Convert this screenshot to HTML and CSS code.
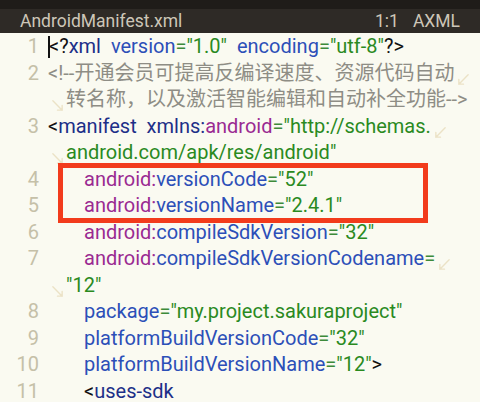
FILE: index.html
```html
<!DOCTYPE html>
<html lang="zh-CN">
<head>
    <meta charset="UTF-8">
    <title>AndroidManifest.xml</title>
    <link rel="stylesheet" href="styles.css">
</head>
<body>
    <div class="editor">
        <div class="titlebar">
            <span class="filename">AndroidManifest.xml</span>
            <span class="status"><span class="pos">1:1</span><span class="mode">AXML</span></span>
        </div>

        <div class="code">
            <div class="line"><span class="num">1</span><span class="src"><span class="cursor"></span><span class="p">&lt;?</span><span class="t">xml</span>  <span class="a">version</span><span class="e">=</span><span class="s">"1.0"</span>  <span class="a">encoding</span><span class="e">=</span><span class="s">"utf-8"</span><span class="p">?&gt;</span></span></div>
            <div class="line"><span class="num">2</span><span class="src c">&lt;!--开通会员可提高反编译速度、资源代码自动<svg class="wrap-end" viewBox="0 0 14 14"><path d="M12 2 L2 12 M2 12 L2 7 M2 12 L7 12"/></svg></span></div>
            <div class="line"><span class="num"></span><span class="src cont c"><svg class="wrap-start" viewBox="0 0 14 14"><path d="M2 2 L12 12 M12 12 L12 7 M12 12 L7 12"/></svg>转名称，以及激活智能编辑和自动补全功能--&gt;</span></div>
            <div class="line"><span class="num">3</span><span class="src"><span class="p">&lt;</span><span class="t">manifest</span>  <span class="t">xmlns:</span><span class="n">android</span><span class="e">=</span><span class="s">"http://schemas.</span><svg class="wrap-end" viewBox="0 0 14 14"><path d="M12 2 L2 12 M2 12 L2 7 M2 12 L7 12"/></svg></span></div>
            <div class="line"><span class="num"></span><span class="src cont"><svg class="wrap-start" viewBox="0 0 14 14"><path d="M2 2 L12 12 M12 12 L12 7 M12 12 L7 12"/></svg><span class="s">android.com/apk/res/android"</span></span></div>
            <div class="marked">
                <div class="line"><span class="num">4</span><span class="src in"><span class="n">android:</span><span class="a">versionCode</span><span class="e">=</span><span class="s">"52"</span></span></div>
                <div class="line"><span class="num">5</span><span class="src in"><span class="n">android:</span><span class="a">versionName</span><span class="e">=</span><span class="s">"2.4.1"</span></span></div>
                <div class="highlight"></div>
            </div>
            <div class="line"><span class="num">6</span><span class="src in"><span class="n">android:</span><span class="a">compileSdkVersion</span><span class="e">=</span><span class="s">"32"</span></span></div>
            <div class="line"><span class="num">7</span><span class="src in"><span class="n">android:</span><span class="a">compileSdkVersionCodename</span><span class="e">=</span><svg class="wrap-end" viewBox="0 0 14 14"><path d="M12 2 L2 12 M2 12 L2 7 M2 12 L7 12"/></svg></span></div>
            <div class="line"><span class="num"></span><span class="src cont"><svg class="wrap-start" viewBox="0 0 14 14"><path d="M2 2 L12 12 M12 12 L12 7 M12 12 L7 12"/></svg><span class="s">"12"</span></span></div>
            <div class="line"><span class="num">8</span><span class="src in"><span class="a">package</span><span class="e">=</span><span class="s">"my.project.sakuraproject"</span></span></div>
            <div class="line"><span class="num">9</span><span class="src in"><span class="a">platformBuildVersionCode</span><span class="e">=</span><span class="s">"32"</span></span></div>
            <div class="line"><span class="num">10</span><span class="src in"><span class="a">platformBuildVersionName</span><span class="e">=</span><span class="s">"12"</span><span class="p">&gt;</span></span></div>
            <div class="line"><span class="num">11</span><span class="src in"><span class="p">&lt;</span><span class="t">uses-sdk</span></span></div>
        </div>
    </div>
</body>
</html>
```

FILE: styles.css
```css
body {
    margin: 0;
    background: #fafaf1;
    font-family: Roboto, "Noto Sans CJK SC", sans-serif;
}

.editor {
    width: 480px;
    height: 402px;
    overflow: hidden;
}

.titlebar {
    height: 24px;
    border-top: 9px solid #1f1c19;
    background: #2e2a26;
    color: #cdc6b8;
    font-size: 17.5px;
    display: flex;
    align-items: center;
    justify-content: space-between;
    padding: 0 20px 0 20px;
}

.status .pos {
    margin-right: 14px;
}

.code {
    font-size: 20px;
    line-height: 26.5px;
}

.line {
    display: flex;
    white-space: pre;
}

.num {
    width: 39px;
    flex: none;
    text-align: right;
    color: #c5c0a8;
    padding-right: 9px;
}

.src {
    display: block;
    color: #111;
}

.src.in {
    padding-left: 36px;
}

.src.cont {
    padding-left: 3px;
}

.cursor {
    display: inline-block;
    width: 2px;
    height: 22px;
    background: #111;
    margin-right: -1px;
    vertical-align: -5px;
}

.marked {
    position: relative;
}

.highlight {
    position: absolute;
    left: 58px;
    top: -3px;
    width: 360px;
    height: 50px;
    border: 5px solid #f23b1c;
}

.wrap-end,
.wrap-start {
    width: 13px;
    height: 13px;
    fill: none;
    stroke: #ebe2c6;
    stroke-width: 1.5;
    stroke-linecap: round;
    vertical-align: -6px;
}

.wrap-end {
    margin-left: 3px;
}

.wrap-start {
    margin-right: 2px;
}

.p { color: #111; }
.t { color: #1d2f88; }
.a { color: #2c4fb8; }
.n { color: #9a2a92; }
.e { color: #3d8a3a; }
.s { color: #2a8a1f; }
.c { color: #8e8d85; }
```
